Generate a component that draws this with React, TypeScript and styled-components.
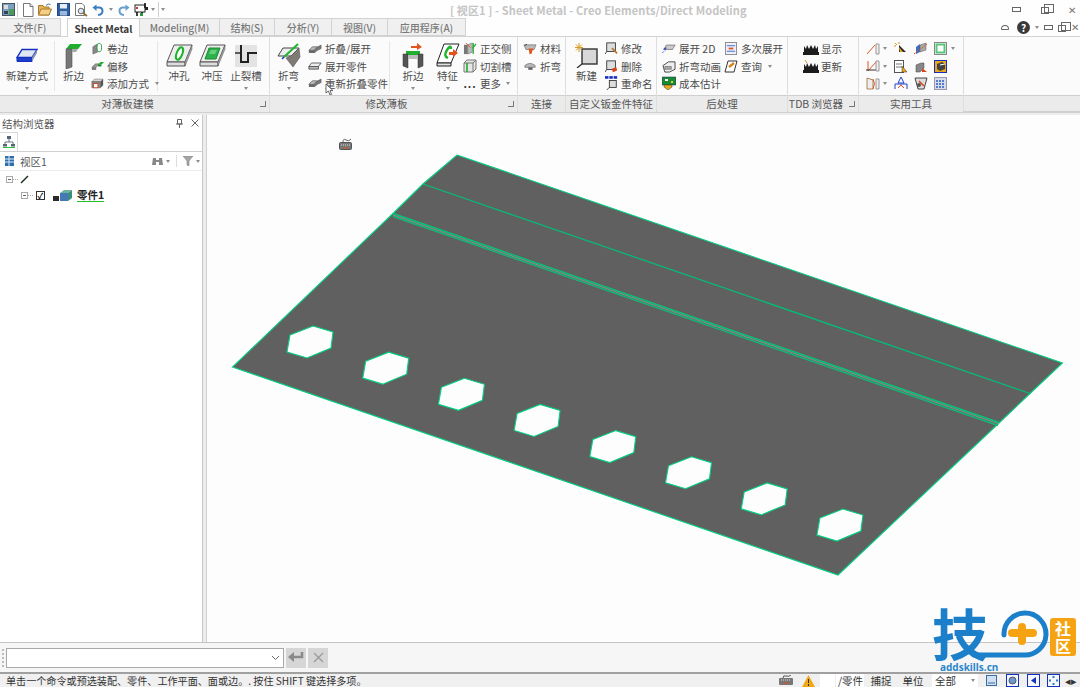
import React from "react";
import styled, { createGlobalStyle } from "styled-components";

const GlobalStyle = createGlobalStyle`
  html, body {
    margin: 0;
    padding: 0;
    background: #fdfdfd;
  }
  * {
    box-sizing: border-box;
  }
`;

const holes = [0, 1, 2, 3, 4, 5, 6, 7].map((i) => {
  const cx = 310 + i * 75.7;
  const cy = 342 + i * 26.15;
  const pts = [
    [-20, -7],
    [3, -16],
    [23, -10],
    [21, 6],
    [-3, 16],
    [-23, 10],
  ];
  return "M" + pts.map((p) => `${cx + p[0]} ${cy + p[1]}`).join("L") + "Z";
});

const outline =
  "M457 155L1062.5 363L1030 393.5L999 423L838 575L232.5 367L393 213.5L423 184Z";

/* quick access icons */
const AppIcon = () => (
  <svg width="13" height="15" viewBox="0 0 13 15">
    <rect x="0.5" y="1.5" width="12" height="12" fill="#7d9fc0" stroke="#456" />
    <rect x="2" y="3" width="4" height="4" fill="#ddd" />
    <rect x="7" y="7" width="5" height="6" fill="#4a9a58" />
    <rect x="2" y="9" width="4" height="3" fill="#345" />
  </svg>
);
const NewDocIcon = () => (
  <svg width="12" height="14" viewBox="0 0 12 14">
    <path d="M1.5 .5H8L11 3.5V13.5H1.5Z" fill="#fff" stroke="#777" />
    <path d="M8 .5V3.5H11" fill="#ddd" stroke="#777" />
  </svg>
);
const OpenIcon = () => (
  <svg width="14" height="13" viewBox="0 0 14 13">
    <path d="M.5 2.5H5L6 4H11V12H.5Z" fill="#e6b45e" stroke="#a67a2c" />
    <path d="M3 6H13.5L11 12H.5Z" fill="#f4cf85" stroke="#a67a2c" />
    <path d="M8 2.5Q10 0 12.5 1.5" fill="none" stroke="#579" />
  </svg>
);
const SaveIcon = () => (
  <svg width="13" height="13" viewBox="0 0 13 13">
    <rect x=".5" y=".5" width="12" height="12" fill="#2f5f9f" stroke="#234a80" />
    <rect x="3" y="1" width="7" height="4.5" fill="#e6eef8" />
    <rect x="3" y="8" width="7" height="4.5" fill="#9db8d8" />
  </svg>
);
const PreviewIcon = () => (
  <svg width="14" height="14" viewBox="0 0 14 14">
    <path d="M1.5 .5H8L10.5 3V12.5H1.5Z" fill="#fff" stroke="#777" />
    <circle cx="7" cy="8" r="2.8" fill="#dbe8f4" stroke="#666" />
    <path d="M9 10L13 13" stroke="#8a6a30" strokeWidth="1.6" />
  </svg>
);
const UndoIcon = () => (
  <svg width="12" height="12" viewBox="0 0 12 12">
    <path d="M3 3.5H7Q10.5 3.5 10.5 7T6 11" fill="none" stroke="#3b7fc0" strokeWidth="2" />
    <path d="M4.5 .5V7L.5 3.5Z" fill="#3b7fc0" />
  </svg>
);
const RedoIcon = () => (
  <svg width="12" height="12" viewBox="0 0 12 12">
    <path d="M9 3.5H5Q1.5 3.5 1.5 7T6 11" fill="none" stroke="#6ba0cc" strokeWidth="2" />
    <path d="M7.5 .5V7L11.5 3.5Z" fill="#6ba0cc" />
  </svg>
);
const MacroIcon = () => (
  <svg width="15" height="15" viewBox="0 0 15 15">
    <rect x="1" y="3" width="10" height="7" fill="#fff" stroke="#222" />
    <path d="M3 10V14M8 10V14M11 1V6" stroke="#111" strokeWidth="1.6" />
    <rect x="6" y="11" width="3" height="3" fill="#2a9a3a" />
    <rect x="11" y="5" width="3" height="3" fill="#222" />
    <rect x="2" y="5" width="2" height="2" fill="#d33" />
  </svg>
);

/* ribbon large icons */
const NewSlabIcon = () => (
  <svg width="22" height="16" viewBox="0 0 22 16">
    <path d="M6 1.5H21L16 9.5H1Z" fill="#dfe6f4" stroke="#1530c0" strokeWidth="1.4" />
    <path d="M1 9.5H16V13.5H1Z" fill="#1e3ec8" stroke="#1530c0" />
    <path d="M16 9.5L21 1.5V5L16 13.5Z" fill="#8a96b8" />
  </svg>
);
const FlangeIcon = () => (
  <svg width="18" height="26" viewBox="0 0 18 26">
    <path d="M1 6L5 1H17L13 6Z" fill="#1fae2e" />
    <path d="M1 6H7V24L1 26Z" fill="#777" stroke="#555" strokeWidth=".6" />
    <path d="M7 6H13L11 9H7Z" fill="#a9a9a9" />
  </svg>
);
const PunchIcon = () => (
  <svg width="27" height="24" viewBox="0 0 27 24">
    <path d="M8 1H26L19 18H1Z" fill="#eee" stroke="#555" />
    <path d="M1 18H19V22H1Z" fill="#ddd" stroke="#555" />
    <path d="M19 18L26 1V5L19 22Z" fill="#aaa" stroke="#555" strokeWidth=".5" />
    <ellipse cx="13.5" cy="9.5" rx="2.8" ry="6.5" transform="rotate(22 13.5 9.5)" fill="#fff" stroke="#1cb52c" strokeWidth="2" />
  </svg>
);
const StampIcon = () => (
  <svg width="27" height="24" viewBox="0 0 27 24">
    <path d="M8 1H26L19 18H1Z" fill="#eee" stroke="#555" />
    <path d="M1 18H19V22H1Z" fill="#ddd" stroke="#555" />
    <path d="M19 18L26 1V5L19 22Z" fill="#aaa" stroke="#555" strokeWidth=".5" />
    <path d="M10 4H21L17 15H6Z" fill="#2cb24a" stroke="#1b8a33" />
    <path d="M12 6H18L16 10H10Z" fill="#67d07e" />
  </svg>
);
const ReliefIcon = () => (
  <svg width="22" height="22" viewBox="0 0 22 22">
    <rect x="0" y="0" width="22" height="22" fill="#e3e3e3" />
    <path d="M6 0V17H13V8H22" fill="none" stroke="#222" strokeWidth="2" />
    <path d="M0 8H6" stroke="#222" strokeWidth="1.4" />
  </svg>
);
const BendIcon = () => (
  <svg width="24" height="25" viewBox="0 0 24 25">
    <path d="M6 5H22L14 13H1Z" fill="#eee" stroke="#444" />
    <path d="M14 13L22 5L23 14L16 24L9 15Z" fill="#7f7a74" stroke="#555" strokeWidth=".6" />
    <path d="M7 14L21 1" stroke="#1fb52e" strokeWidth="2" />
    <path d="M5 16L7 14" stroke="#1530c0" strokeWidth="1.4" />
  </svg>
);
const FlangeEditIcon = () => (
  <svg width="22" height="26" viewBox="0 0 22 26">
    <path d="M9 3H15V0L20 4L15 7V5H9Z" fill="#e2531e" />
    <path d="M4 8H18V12H4Z" fill="#1fae2e" />
    <path d="M1 11H6V25L1 23Z" fill="#555" stroke="#333" strokeWidth=".5" />
    <path d="M16 11H21V23L16 25Z" fill="#555" stroke="#333" strokeWidth=".5" />
    <path d="M6 12H16V16H6Z" fill="#bbb" />
  </svg>
);
const FeatureIcon = () => (
  <svg width="24" height="25" viewBox="0 0 24 25">
    <path d="M8 1H23L15 20H1Z" fill="#fff" stroke="#222" />
    <path d="M1 20H15V23H1Z" fill="#e0e0e0" stroke="#222" />
    <path d="M12 15Q7 13 11 7T15 6" fill="none" stroke="#1cb52c" strokeWidth="2.4" />
    <path d="M13 9H17V6L22 10L17 14V12H13Z" fill="#e2531e" />
  </svg>
);
const NewCustomIcon = () => (
  <svg width="24" height="25" viewBox="0 0 24 25">
    <rect x="7" y="6" width="15" height="15" fill="#d8d8d8" stroke="#333" strokeWidth="1.4" />
    <path d="M7 21L2 25" stroke="#333" strokeWidth="1.4" />
    <path d="M4 0V9M0 4.5H8M1 1.5L7 7.5M7 1.5L1 7.5" stroke="#d99a20" />
  </svg>
);

/* ribbon small icons */
const CurlIcon = () => (
  <svg width="12" height="13" viewBox="0 0 13 14">
    <path d="M2 5L7 2V11L2 13Z" fill="#888" stroke="#555" strokeWidth=".5" />
    <ellipse cx="9" cy="6" rx="2.5" ry="4.5" fill="#fff" stroke="#1b9a33" />
  </svg>
);
const OffsetIcon = () => (
  <svg width="13" height="10" viewBox="0 0 15 11">
    <path d="M1 7L5 3H10L6 7Z" fill="#999" stroke="#555" strokeWidth=".5" />
    <path d="M1 7H6V10H1Z" fill="#777" />
    <path d="M8 4L11 1H15L12 4Z" fill="#1fae2e" />
    <path d="M8 4H12V6H8Z" fill="#178a25" />
  </svg>
);
const AddModeIcon = () => (
  <svg width="13" height="12" viewBox="0 0 15 13">
    <path d="M1 5L4 2H14L11 5Z" fill="#d8d8d8" stroke="#555" strokeWidth=".5" />
    <path d="M1 5H11V12H1Z" fill="#888" stroke="#444" strokeWidth=".5" />
    <rect x="3" y="7" width="5" height="5" fill="#fff" stroke="#d0421b" />
    <path d="M11 5L14 2V9L11 12Z" fill="#555" />
  </svg>
);
const FoldPairIcon = () => (
  <svg width="14" height="12" viewBox="0 0 16 13">
    <path d="M1 8L5 4H11L7 8Z" fill="#bbb" stroke="#444" strokeWidth=".7" />
    <path d="M1 8H7V11H1Z" fill="#666" />
    <path d="M7 8L11 4L15 2V6L11 8L7 11Z" fill="#777" stroke="#444" strokeWidth=".5" />
  </svg>
);
const FlatIcon = () => (
  <svg width="14" height="9" viewBox="0 0 16 10">
    <path d="M4 1H15L12 5H1Z" fill="#eee" stroke="#555" />
    <path d="M1 5H12V8H1Z" fill="#bbb" stroke="#555" />
  </svg>
);
const OrthoIcon = () => (
  <svg width="14" height="13" viewBox="0 0 15 14">
    <path d="M1 3H5V13H1Z" fill="#777" />
    <path d="M5 3L10 1V11L5 13Z" fill="#bbb" stroke="#555" strokeWidth=".5" />
    <path d="M11 1V13M14 2L10 7" stroke="#1fae2e" strokeWidth="1.3" />
    <path d="M3 1L8 6" stroke="#e2531e" />
  </svg>
);
const SlotIcon = () => (
  <svg width="14" height="14" viewBox="0 0 14 14">
    <path d="M1 4L4 1H13V10L10 13H1Z" fill="#e6e6e6" stroke="#777" />
    <path d="M1 4H10V13M10 4L13 1" fill="none" stroke="#777" />
    <path d="M4 4V13" stroke="#1fae2e" strokeWidth="1.6" />
  </svg>
);
const MaterialIcon = () => (
  <svg width="14" height="12" viewBox="0 0 15 13">
    <path d="M1 2H14L12 7H3Z" fill="#bbb" stroke="#555" strokeWidth=".6" />
    <path d="M6 6H11L9 12H7Z" fill="#e2531e" />
    <path d="M4 1L2 3" stroke="#222" />
  </svg>
);
const BendSmallIcon = () => (
  <svg width="12" height="10" viewBox="0 0 14 11">
    <path d="M1 5Q7 0 13 5V7H1Z" fill="#bbb" stroke="#555" strokeWidth=".7" />
    <path d="M5 7H10V10H5Z" fill="#666" />
  </svg>
);
const EditBoxIcon = () => (
  <svg width="13" height="13" viewBox="0 0 15 15">
    <rect x="2" y="1" width="10" height="10" fill="#ddd" stroke="#333" />
    <path d="M2 11L0 14" stroke="#333" />
    <path d="M8 7L14 13" stroke="#b07a30" strokeWidth="2" />
  </svg>
);
const DeleteBoxIcon = () => (
  <svg width="13" height="13" viewBox="0 0 15 15">
    <rect x="2" y="1" width="10" height="10" fill="#ddd" stroke="#333" />
    <path d="M2 11L0 14" stroke="#333" />
    <path d="M8 10L13 8L14 12L9 14Z" fill="#d9421b" />
  </svg>
);
const RenameIcon = () => (
  <svg width="13" height="15" viewBox="0 0 15 17">
    <rect x="0" y="0" width="4" height="3" fill="#1530c0" />
    <rect x="5" y="0" width="4" height="3" fill="#1530c0" />
    <rect x="10" y="0" width="4" height="3" fill="#1530c0" />
    <rect x="5" y="5" width="8" height="8" fill="#ddd" stroke="#333" />
    <path d="M5 13L2 16" stroke="#333" />
  </svg>
);
const Flat2dIcon = () => (
  <svg width="14" height="10" viewBox="0 0 16 11">
    <path d="M5 1H15L12 6H2Z" fill="#ccc" stroke="#555" strokeWidth=".7" />
    <path d="M2 6L5 4" stroke="#1e3ec8" strokeWidth="1.4" />
    <path d="M0 10L4 7" stroke="#1e3ec8" strokeDasharray="1 1" />
  </svg>
);
const AnimateIcon = () => (
  <svg width="14" height="13" viewBox="0 0 15 14">
    <path d="M1 6L7 2H14V10L8 13H3Z" fill="#eee" stroke="#444" />
    <path d="M3 7H10V10H3Z" fill="#aaa" stroke="#444" strokeWidth=".5" />
  </svg>
);
const CostIcon = () => (
  <svg width="14" height="14" viewBox="0 0 14 14">
    <rect x="0" y="1" width="14" height="8" fill="#1b8a33" stroke="#135" strokeWidth=".5" />
    <path d="M2 9H10V11L6 14L2 11Z" fill="#e8a818" stroke="#333" strokeWidth=".5" />
    <rect x="3" y="3" width="3" height="2" fill="#fff" />
    <rect x="9" y="5" width="2" height="2" fill="#dc3" />
  </svg>
);
const MultiFlatIcon = () => (
  <svg width="12" height="13" viewBox="0 0 13 14">
    <rect x=".5" y=".5" width="12" height="13" fill="#eef" stroke="#888" />
    <path d="M2 4H11M2 10H11" stroke="#3b6fc0" />
    <path d="M4 7H9" stroke="#e2531e" strokeWidth="2" />
  </svg>
);
const QueryIcon = () => (
  <svg width="14" height="13" viewBox="0 0 14 13">
    <path d="M4 1H13L10 12H1Z" fill="#fff" stroke="#333" />
    <path d="M5 7L10 3" stroke="#d9821b" strokeWidth="2.4" />
  </svg>
);
const TdbIcon = ({ spark }: { spark?: boolean }) => (
  <svg width="16" height="13" viewBox="0 0 16 13">
    {spark && <path d="M2 0L4 3" stroke="#d99a20" />}
    <path d="M0 13V10H1V4L3 7L4 3L6 7L8 3L10 7L12 3L13 7L15 4V10H16V13Z" fill="#1c1c1c" />
  </svg>
);

/* utility grid icons */
const UtilA = () => (
  <svg width="14" height="12" viewBox="0 0 14 12">
    <path d="M1 11L9 2" stroke="#e2531e" />
    <path d="M10 1H13V11H10Z" fill="#eee" stroke="#999" />
  </svg>
);
const UtilB = () => (
  <svg width="14" height="13" viewBox="0 0 14 13">
    <path d="M2 1V11L10 2" fill="none" stroke="#e2531e" />
    <path d="M0 10H10" stroke="#333" />
    <path d="M10 1H13V11H10Z" fill="#eee" stroke="#999" />
  </svg>
);
const UtilC = () => (
  <svg width="14" height="13" viewBox="0 0 14 13">
    <path d="M1 1L7 3V12H1Z" fill="#eee" stroke="#a85" />
    <path d="M7 2Q10 6 7 12" fill="none" stroke="#e2531e" />
    <path d="M10 2H13V12H10Z" fill="#eee" stroke="#999" />
  </svg>
);
const UtilD = () => (
  <svg width="13" height="13" viewBox="0 0 13 13">
    <path d="M5 3L12 10H5Z" fill="#2a2a2a" />
    <path d="M5 5L9 10H6Z" fill="#e8a818" />
    <path d="M1 1L3 3M5 0V2M0 4H2" stroke="#d99a20" />
  </svg>
);
const UtilE = () => (
  <svg width="14" height="13" viewBox="0 0 14 13">
    <rect x=".5" y=".5" width="9" height="12" fill="#fff" stroke="#555" />
    <path d="M2 4H8M2 7H8" stroke="#777" />
    <path d="M8 6L13 12H8Z" fill="#e8a818" stroke="#333" strokeWidth=".5" />
  </svg>
);
const UtilF = () => (
  <svg width="14" height="13" viewBox="0 0 14 13">
    <path d="M2 5L6 2V10L2 12Z" fill="#3b6fc0" />
    <path d="M6 3L12 1V8L6 10Z" fill="#aaa" stroke="#555" strokeWidth=".5" />
    <path d="M0 12L13 2" stroke="#e2531e" strokeDasharray="2 1" />
  </svg>
);
const UtilG = () => (
  <svg width="13" height="13" viewBox="0 0 13 13">
    <rect x=".5" y=".5" width="12" height="12" fill="#fff" stroke="#888" />
    <rect x="2.5" y="2.5" width="8" height="8" fill="#fff" stroke="#57c87a" strokeWidth="2" />
  </svg>
);
const UtilH = () => (
  <svg width="14" height="13" viewBox="0 0 14 13">
    <path d="M2 12V5L7 3H10V8L6 12Z" fill="#888" stroke="#444" strokeWidth=".5" />
    <path d="M8 8L13 12H8Z" fill="#d9421b" />
  </svg>
);
const UtilI = () => (
  <svg width="13" height="13" viewBox="0 0 13 13">
    <rect x=".5" y=".5" width="12" height="12" fill="#e8a818" stroke="#1530c0" />
    <path d="M3 4L8 2L11 4V9L6 11L3 9Z" fill="#444" />
    <path d="M6 5L11 4" stroke="#fff" />
  </svg>
);
const UtilJ = () => (
  <svg width="14" height="14" viewBox="0 0 14 14">
    <path d="M7 1L10 7H4Z" fill="#fff" stroke="#1e3ec8" />
    <path d="M1 13V8H13V13" fill="none" stroke="#1e3ec8" />
    <path d="M4 12L7 9L10 12" fill="none" stroke="#e2531e" />
  </svg>
);
const UtilK = () => (
  <svg width="14" height="13" viewBox="0 0 14 13">
    <path d="M1 1H13L10 12H4Z" fill="#ddd" stroke="#444" />
    <path d="M5 4L10 9" stroke="#d9421b" strokeWidth="1.5" />
    <circle cx="5" cy="8" r="2" fill="#555" />
  </svg>
);
const UtilL = () => (
  <svg width="13" height="13" viewBox="0 0 13 13">
    <rect x=".5" y=".5" width="12" height="12" fill="#d6dcec" stroke="#99a" />
    <path d="M2 4H11M2 7H11M2 10H11" stroke="#2f5fc0" strokeWidth="1.4" strokeDasharray="2 1" />
  </svg>
);

/* status bar and browser icons */
const TreeTabIcon = () => (
  <svg width="12" height="12" viewBox="0 0 12 12">
    <rect x="4" y="0" width="4" height="3" fill="#567" />
    <path d="M6 3V6M2 6H10M2 6V8M10 6V8" stroke="#678" />
    <rect x="0" y="8" width="4" height="2.5" fill="#567" />
    <rect x="8" y="8" width="4" height="2.5" fill="#567" />
    <path d="M0 11.5H12" stroke="#2cc23c" />
  </svg>
);
const ViewIcon = () => (
  <svg width="9" height="10" viewBox="0 0 9 10">
    <rect x="0" y="0" width="9" height="10" fill="#2f6fb0" />
    <path d="M4 0V10M0 3H9M0 6H9" stroke="#dfeaf5" />
  </svg>
);
const BinocularIcon = () => (
  <svg width="11" height="9" viewBox="0 0 11 9">
    <path d="M1 1H4V3H7V1H10L11 8H7V5H4V8H0Z" fill="#888" />
  </svg>
);
const FunnelIcon = () => (
  <svg width="10" height="10" viewBox="0 0 10 10">
    <path d="M0 0H10L6 5V10L4 9V5Z" fill="#a6a6a6" stroke="#777" strokeWidth=".5" />
  </svg>
);
const PartIcon = () => (
  <svg width="19" height="11" viewBox="0 0 19 11">
    <rect x="0" y="6" width="6" height="5" fill="#2a2a2a" />
    <path d="M7 3H15V11H7Z" fill="#4479b5" />
    <path d="M7 3L11 0H19L15 3Z" fill="#6bb39a" />
    <path d="M15 3L19 0V8L15 11Z" fill="#3b8d7c" />
  </svg>
);
const PencilIcon = () => (
  <svg width="9" height="9" viewBox="0 0 9 9">
    <path d="M1 8L8 1" stroke="#1c2c1c" strokeWidth="1.4" />
  </svg>
);
const PinIcon = () => (
  <svg width="7" height="9" viewBox="0 0 7 9">
    <path d="M1.5 .5H5.5V5H1.5ZM0 5H7M3.5 5V9" fill="none" stroke="#666" />
  </svg>
);
const PanelCloseIcon = () => (
  <svg width="8" height="8" viewBox="0 0 8 8">
    <path d="M.5 .5L7.5 7.5M7.5 .5L.5 7.5" stroke="#666" />
  </svg>
);
const EnterIcon = () => (
  <svg width="18" height="13" viewBox="0 0 18 13">
    <path d="M15 1V6H6" fill="none" stroke="#8a8a8a" strokeWidth="2.6" />
    <path d="M7 1V11L1 6Z" fill="#8a8a8a" />
  </svg>
);
const CancelIcon = () => (
  <svg width="11" height="11" viewBox="0 0 11 11">
    <path d="M1 1L10 10M10 1L1 10" stroke="#9a9a9a" strokeWidth="1.3" />
  </svg>
);
const KeyboardIcon = () => (
  <svg width="14" height="11" viewBox="0 0 14 11">
    <path d="M4 3Q4 0 7 1T12 0" fill="none" stroke="#555" />
    <rect x="0" y="3" width="14" height="7" rx="1" fill="#777" />
    <path d="M2 5H12" stroke="#ddd" strokeDasharray="1 1" />
    <path d="M4 8H10" stroke="#e2531e" />
  </svg>
);
const WarnIcon = () => (
  <svg width="13" height="12" viewBox="0 0 13 12">
    <path d="M6.5 0L13 12H0Z" fill="#f0a818" />
    <path d="M6.5 4V8M6.5 9V11" stroke="#333" />
  </svg>
);
const WinViewIcon = () => (
  <svg width="11" height="11" viewBox="0 0 11 11">
    <rect x=".5" y=".5" width="10" height="10" fill="#cfe0f2" stroke="#3b6fa0" />
    <path d="M2 8H9" stroke="#3b6fa0" />
  </svg>
);
const OutlineBox = ({ children }: { children: React.ReactNode }) => (
  <svg width="13" height="13" viewBox="0 0 13 13">
    <rect x=".5" y=".5" width="12" height="12" fill="#f4f7fb" stroke="#1530c0" />
    {children}
  </svg>
);

const Sheet = () => (
  <ModelSvg viewBox="207 115 873 527">
    <path d={outline + holes.join("")} fill="#606060" fillRule="evenodd" stroke="#00d080" strokeWidth="1.1" />
    <path d="M423 184L1030 393.5" stroke="#00c078" strokeWidth="1.2" />
    <path d="M393 213.5L999 422.5" stroke="#00c878" strokeWidth="1.4" />
    <path d="M393 216.5L998 425.5" stroke="#10b878" strokeWidth="1.4" />
    <path d="M393 215L999 424" stroke="#7a9a8c" strokeWidth="1" />
    <g transform="translate(339 138)">
      <path d="M4 4Q4 0 7 2T12 1" fill="none" stroke="#666" />
      <rect x="0.5" y="4.5" width="12" height="7" rx="1" fill="#777" stroke="#555" />
      <path d="M2 7H11" stroke="#ddd" strokeDasharray="1 1" />
      <path d="M4 10H9" stroke="#e2531e" />
    </g>
  </ModelSvg>
);

export default function App() {
  return (
    <Page>
      <GlobalStyle />
      <TitleBar>
        <Qat>
          <QatSlot $w={14}><AppIcon /></QatSlot>
          <QatSep />
          <QatSlot $w={16}><NewDocIcon /></QatSlot>
          <QatSlot $w={18}><OpenIcon /></QatSlot>
          <QatSlot $w={18}><SaveIcon /></QatSlot>
          <QatSlot $w={17}><PreviewIcon /></QatSlot>
          <QatSlot $w={18}><UndoIcon /></QatSlot>
          <QatSlot $w={8}><Caret /></QatSlot>
          <QatSlot $w={18}><RedoIcon /></QatSlot>
          <QatSlot $w={17}><MacroIcon /></QatSlot>
          <QatSlot $w={6}><Caret /></QatSlot>
          <QatSep />
          <QatSlot $w={4}><Caret /></QatSlot>
        </Qat>
        <WindowTitle>[ 视区1 ] - Sheet Metal - Creo Elements/Direct Modeling</WindowTitle>
        <WinButtons>
          <MinGlyph />
          <RestoreGlyph />
          <CloseGlyph>✕</CloseGlyph>
        </WinButtons>
      </TitleBar>

      <TabRow>
        <Tab $w={61}>文件(F)</Tab>
        <TabGap />
        <Tab $w={73} $active>Sheet Metal</Tab>
        <Tab $w={80}>Modeling(M)</Tab>
        <Tab $w={55}>结构(S)</Tab>
        <Tab $w={57}>分析(Y)</Tab>
        <Tab $w={56}>视图(V)</Tab>
        <Tab $w={78}>应用程序(A)</Tab>
        <TabTools>
          <CollapseGlyph />
          <HelpGlyph>?</HelpGlyph>
          <Caret />
          <MinGlyph />
          <RestoreGlyph />
          <CloseGlyph>✕</CloseGlyph>
        </TabTools>
      </TabRow>

      <Ribbon>
        <Group $w={270}>
          <GroupBody>
            <LargeBtn $w={54}>
              <LargeIcon><NewSlabIcon /></LargeIcon>
              <LargeLabel>新建方式</LargeLabel>
              <Caret />
            </LargeBtn>
            <Sep />
            <LargeBtn $w={31}>
              <LargeIcon><FlangeIcon /></LargeIcon>
              <LargeLabel>折边</LargeLabel>
            </LargeBtn>
            <SmallCol $w={68}>
              <SmallRow><SmallIcon><CurlIcon /></SmallIcon>卷边</SmallRow>
              <SmallRow><SmallIcon><OffsetIcon /></SmallIcon>偏移</SmallRow>
              <SmallRow><SmallIcon><AddModeIcon /></SmallIcon>添加方式<Caret $ml={4} /></SmallRow>
            </SmallCol>
            <Sep />
            <LargeBtn $w={36}>
              <LargeIcon><PunchIcon /></LargeIcon>
              <LargeLabel>冲孔</LargeLabel>
            </LargeBtn>
            <LargeBtn $w={30}>
              <LargeIcon><StampIcon /></LargeIcon>
              <LargeLabel>冲压</LargeLabel>
            </LargeBtn>
            <LargeBtn $w={38}>
              <LargeIcon><ReliefIcon /></LargeIcon>
              <LargeLabel>止裂槽</LargeLabel>
              <Caret />
            </LargeBtn>
          </GroupBody>
          <GroupLabel $launcher>对薄板建模<Launcher /></GroupLabel>
        </Group>

        <Group $w={248}>
          <GroupBody>
            <LargeBtn $w={37}>
              <LargeIcon><BendIcon /></LargeIcon>
              <LargeLabel>折弯</LargeLabel>
              <Caret />
            </LargeBtn>
            <SmallCol $w={82}>
              <SmallRow><SmallIcon><FoldPairIcon /></SmallIcon>折叠/展开</SmallRow>
              <SmallRow><SmallIcon><FlatIcon /></SmallIcon>展开零件</SmallRow>
              <SmallRow>
                <SmallIcon><FoldPairIcon /></SmallIcon>重新折叠零件
                <Cursor viewBox="0 0 9 13" width="9" height="13">
                  <path d="M1 1V10L3.4 8L5 12L6.5 11.4L5 7.6H8Z" fill="#fff" stroke="#444" strokeWidth=".8" />
                </Cursor>
              </SmallRow>
            </SmallCol>
            <Sep />
            <LargeBtn $w={40}>
              <LargeIcon><FlangeEditIcon /></LargeIcon>
              <LargeLabel>折边</LargeLabel>
              <Caret />
            </LargeBtn>
            <LargeBtn $w={29}>
              <LargeIcon><FeatureIcon /></LargeIcon>
              <LargeLabel>特征</LargeLabel>
              <Caret />
            </LargeBtn>
            <SmallCol $w={55}>
              <SmallRow><SmallIcon><OrthoIcon /></SmallIcon>正交侧</SmallRow>
              <SmallRow><SmallIcon><SlotIcon /></SmallIcon>切割槽</SmallRow>
              <SmallRow><SmallIcon>...</SmallIcon>更多<Caret $ml={3} /></SmallRow>
            </SmallCol>
          </GroupBody>
          <GroupLabel $launcher>修改薄板<Launcher /></GroupLabel>
        </Group>

        <Group $w={48}>
          <GroupBody $pad={4}>
            <SmallCol $w={43}>
              <SmallRow><SmallIcon><MaterialIcon /></SmallIcon>材料</SmallRow>
              <SmallRow><SmallIcon><BendSmallIcon /></SmallIcon>折弯</SmallRow>
            </SmallCol>
          </GroupBody>
          <GroupLabel>连接</GroupLabel>
        </Group>

        <Group $w={91}>
          <GroupBody $pad={4}>
            <LargeBtn $w={33}>
              <LargeIcon><NewCustomIcon /></LargeIcon>
              <LargeLabel>新建</LargeLabel>
            </LargeBtn>
            <SmallCol $w={54}>
              <SmallRow><SmallIcon><EditBoxIcon /></SmallIcon>修改</SmallRow>
              <SmallRow><SmallIcon><DeleteBoxIcon /></SmallIcon>删除</SmallRow>
              <SmallRow><SmallIcon><RenameIcon /></SmallIcon>重命名</SmallRow>
            </SmallCol>
          </GroupBody>
          <GroupLabel>自定义钣金件特征</GroupLabel>
        </Group>

        <Group $w={131}>
          <GroupBody $pad={4}>
            <SmallCol $w={62}>
              <SmallRow><SmallIcon><Flat2dIcon /></SmallIcon>展开 2D</SmallRow>
              <SmallRow><SmallIcon><AnimateIcon /></SmallIcon>折弯动画</SmallRow>
              <SmallRow><SmallIcon><CostIcon /></SmallIcon>成本估计</SmallRow>
            </SmallCol>
            <SmallCol $w={60}>
              <SmallRow><SmallIcon><MultiFlatIcon /></SmallIcon>多次展开</SmallRow>
              <SmallRow><SmallIcon><QueryIcon /></SmallIcon>查询<Caret $ml={4} /></SmallRow>
            </SmallCol>
          </GroupBody>
          <GroupLabel>后处理</GroupLabel>
        </Group>

        <Group $w={71}>
          <GroupBody $pad={15}>
            <SmallCol $w={50}>
              <SmallRow><SmallIcon><TdbIcon /></SmallIcon>显示</SmallRow>
              <SmallRow><SmallIcon><TdbIcon spark /></SmallIcon>更新</SmallRow>
            </SmallCol>
          </GroupBody>
          <GroupLabel $launcher>TDB 浏览器<Launcher /></GroupLabel>
        </Group>

        <Group $w={105}>
          <GroupBody $pad={7}>
            <UtilGrid>
              <UtilCell><UtilA /><Caret $ml={3} /></UtilCell>
              <UtilCell><UtilD /></UtilCell>
              <UtilCell><UtilF /></UtilCell>
              <UtilCell><UtilG /><Caret $ml={4} /></UtilCell>
              <UtilCell><UtilB /><Caret $ml={3} /></UtilCell>
              <UtilCell><UtilE /></UtilCell>
              <UtilCell><UtilH /></UtilCell>
              <UtilCell><UtilI /></UtilCell>
              <UtilCell><UtilC /><Caret $ml={3} /></UtilCell>
              <UtilCell><UtilJ /></UtilCell>
              <UtilCell><UtilK /></UtilCell>
              <UtilCell><UtilL /></UtilCell>
            </UtilGrid>
          </GroupBody>
          <GroupLabel>实用工具</GroupLabel>
        </Group>

        <GroupFiller>
          <GroupFillerBody />
          <GroupFillerLabel />
        </GroupFiller>
      </Ribbon>

      <Main>
        <Browser>
          <BrowserHeader>
            <span>结构浏览器</span>
            <BrowserTools>
              <PinIcon />
              <PanelCloseIcon />
            </BrowserTools>
          </BrowserHeader>
          <BrowserTabs>
            <BrowserTab><TreeTabIcon /></BrowserTab>
          </BrowserTabs>
          <ViewRow>
            <ViewIcon />
            <ViewName>视区1</ViewName>
            <ViewTools>
              <BinocularIcon />
              <Caret />
              <ToolDivider />
              <FunnelIcon />
              <Caret />
            </ViewTools>
          </ViewRow>
          <Tree>
            <TreeRow $depth={0}>
              <Expander />
              <TreeDash />
              <PencilIcon />
            </TreeRow>
            <TreeRow $depth={1}>
              <Expander />
              <TreeDash />
              <TreeCheck>✓</TreeCheck>
              <PartIcon />
              <PartName>零件1</PartName>
            </TreeRow>
          </Tree>
        </Browser>
        <Splitter />
        <Viewport>
          <Sheet />
        </Viewport>
      </Main>

      <CommandBar>
        <Grip />
        <CommandBox>
          <CommandChevron viewBox="0 0 9 6" width="9" height="6">
            <path d="M1 1L4.5 4.5L8 1" fill="none" stroke="#666" />
          </CommandChevron>
        </CommandBox>
        <CommandBtn><EnterIcon /></CommandBtn>
        <CommandBtn><CancelIcon /></CommandBtn>
      </CommandBar>

      <StatusBar>
        <StatusText>单击一个命令或预选装配、零件、工作平面、面或边。. 按住 SHIFT 键选择多项。</StatusText>
        <StatusRight>
          <StatusSlot $w={20}><KeyboardIcon /></StatusSlot>
          <StatusSlot $w={24}><WarnIcon /></StatusSlot>
          <StatusField $w={15} />
          <StatusField $w={28}>/零件</StatusField>
          <StatusSlot $w={32}>捕捉</StatusSlot>
          <StatusSlot $w={32}>单位</StatusSlot>
          <StatusCombo>全部<Caret /></StatusCombo>
          <StatusSlot $w={21}><WinViewIcon /></StatusSlot>
          <StatusSlot $w={21}>
            <OutlineBox><circle cx="6.5" cy="6.5" r="3.5" fill="#6a9ac8" stroke="#556" /></OutlineBox>
          </StatusSlot>
          <StatusSlot $w={21}>
            <OutlineBox><path d="M9 3V10L4 6.5Z" fill="#1530c0" /></OutlineBox>
          </StatusSlot>
          <StatusSlot $w={18}>
            <OutlineBox><path d="M6.5 2V4M6.5 9V11M2 6.5H4M9 6.5H11" stroke="#2f7fc0" strokeWidth="2" /></OutlineBox>
          </StatusSlot>
          <StatusSlot $w={18}>◂▸</StatusSlot>
        </StatusRight>
      </StatusBar>

      <Logo>
        <LogoRow>
          <LogoGlyph>技</LogoGlyph>
          <LogoRing viewBox="0 0 60 54" width="60" height="54">
            <path
              d="M-16 50H33A21 21 0 1 0 14 30"
              fill="none"
              stroke="#1c7fc9"
              strokeWidth="5"
              strokeLinecap="round"
            />
            <path d="M22 28H43M32 22V36" stroke="#f5a313" strokeWidth="8" strokeLinecap="round" />
          </LogoRing>
          <LogoBadge>
            <LogoBadgeChar>社</LogoBadgeChar>
            <LogoBadgeChar>区</LogoBadgeChar>
          </LogoBadge>
        </LogoRow>
        <LogoDomain>addskills.cn</LogoDomain>
      </Logo>
    </Page>
  );
}

const cjk = `"Noto Sans CJK SC", "Noto Sans", sans-serif`;

const Page = styled.div`
  position: relative;
  width: 1080px;
  height: 687px;
  overflow: hidden;
  display: flex;
  flex-direction: column;
  background: #fdfdfd;
  font-family: ${cjk};
  font-size: 10.5px;
  color: #4c4c4c;
`;

const TitleBar = styled.div`
  height: 19px;
  flex: none;
  display: flex;
  align-items: center;
  background: #fefefe;
  padding-left: 1px;
`;

const Qat = styled.div`
  width: 166px;
  display: flex;
  align-items: center;
`;

const QatSlot = styled.div<{ $w: number }>`
  width: ${(p) => p.$w}px;
  flex: none;
  display: flex;
  justify-content: center;
  align-items: center;
`;

const QatSep = styled.div`
  width: 1px;
  height: 15px;
  flex: none;
  margin: 0 2px;
  background: #cfcfcf;
`;

const WindowTitle = styled.div`
  margin-left: 283px;
  font-weight: 700;
  font-size: 11px;
  letter-spacing: 0.1px;
  color: #c4c4c4;
  white-space: nowrap;
`;

const WinButtons = styled.div`
  margin-left: auto;
  width: 68px;
  padding-right: 4px;
  display: flex;
  justify-content: space-between;
  align-items: center;
`;

const MinGlyph = styled.div`
  width: 9px;
  height: 5px;
  border: 1px solid #666;
`;

const RestoreGlyph = styled.div`
  position: relative;
  width: 8px;
  height: 7px;
  margin-top: 2px;
  border: 1px solid #666;

  &::after {
    content: "";
    position: absolute;
    left: 2px;
    top: -4px;
    width: 8px;
    height: 7px;
    border: 1px solid #666;
  }
`;

const CloseGlyph = styled.div`
  font-size: 10px;
  line-height: 10px;
  color: #777;
`;

const TabRow = styled.div`
  height: 18px;
  flex: none;
  display: flex;
  align-items: flex-end;
  background: #fefefe;
  border-bottom: 1px solid #d2d2d2;
`;

const Tab = styled.div<{ $w: number; $active?: boolean }>`
  position: relative;
  width: ${(p) => p.$w}px;
  height: ${(p) => (p.$active ? 19 : 18)}px;
  flex: none;
  display: flex;
  align-items: center;
  justify-content: center;
  font-size: 10px;
  white-space: nowrap;
  font-weight: ${(p) => (p.$active ? 700 : 500)};
  color: ${(p) => (p.$active ? "#3a3a3a" : "#7a7a7a")};
  background: ${(p) => (p.$active ? "#fdfdfd" : "#f0f0f0")};
  border: 1px solid #d2d2d2;
  border-left-width: ${(p) => (p.$active ? 1 : 0)}px;
  border-bottom: ${(p) => (p.$active ? "none" : "1px solid #d2d2d2")};
  margin-bottom: ${(p) => (p.$active ? -1 : 0)}px;
  z-index: ${(p) => (p.$active ? 1 : 0)};
`;

const TabGap = styled.div`
  width: 6px;
  flex: none;
`;

const TabTools = styled.div`
  margin-left: auto;
  height: 18px;
  padding-right: 1px;
  display: flex;
  align-items: center;
  gap: 5px;
`;

const CollapseGlyph = styled.div`
  width: 8px;
  height: 5px;
  border: 1px solid #666;
  border-radius: 5px 5px 1px 1px;
  margin-right: 3px;
`;

const HelpGlyph = styled.div`
  width: 13px;
  height: 13px;
  border-radius: 50%;
  background: #3a3a3a;
  color: #fff;
  font-size: 10px;
  font-weight: 700;
  line-height: 13px;
  text-align: center;
`;

const Caret = styled.span<{ $ml?: number }>`
  display: inline-block;
  flex: none;
  width: 0;
  height: 0;
  margin-left: ${(p) => p.$ml ?? 0}px;
  border-left: 2.5px solid transparent;
  border-right: 2.5px solid transparent;
  border-top: 3px solid #8c8c8c;
`;

const Ribbon = styled.div`
  height: 76px;
  flex: none;
  display: flex;
  border-bottom: 2px solid #d0d0d0;
  background: #fbfbfb;
`;

const Group = styled.div<{ $w: number }>`
  width: ${(p) => p.$w}px;
  flex: none;
  display: flex;
  flex-direction: column;
  border-right: 1px solid #dedede;
`;

const GroupBody = styled.div<{ $pad?: number }>`
  height: 58px;
  flex: none;
  display: flex;
  padding-left: ${(p) => p.$pad ?? 0}px;
`;

const GroupLabel = styled.div<{ $launcher?: boolean }>`
  position: relative;
  flex: 1;
  display: flex;
  align-items: center;
  justify-content: center;
  padding-right: ${(p) => (p.$launcher ? 14 : 0)}px;
  padding-bottom: 1px;
  background: #ebebeb;
  border-top: 1px solid #cfcfcf;
  color: #555;
  font-size: 10.5px;
  white-space: nowrap;
`;

const Launcher = styled.span`
  position: absolute;
  right: 3px;
  top: 5px;
  width: 6px;
  height: 6px;
  border-right: 1px solid #777;
  border-bottom: 1px solid #777;
`;

const GroupFiller = styled.div`
  flex: 1;
  display: flex;
  flex-direction: column;
`;

const GroupFillerBody = styled.div`
  height: 58px;
`;

const GroupFillerLabel = styled.div`
  flex: 1;
  background: #ebebeb;
  border-top: 1px solid #cfcfcf;
`;

const LargeBtn = styled.div<{ $w: number }>`
  width: ${(p) => p.$w}px;
  flex: none;
  display: flex;
  flex-direction: column;
  align-items: center;
  padding-top: 6px;
`;

const LargeIcon = styled.div`
  height: 25px;
  display: flex;
  align-items: center;
  justify-content: center;
`;

const LargeLabel = styled.div`
  height: 19px;
  line-height: 16px;
  font-size: 10.5px;
  white-space: nowrap;
`;

const Sep = styled.div`
  width: 1px;
  flex: none;
  margin: 4px 3px 4px 0;
  background: #e6e6e6;
`;

const SmallCol = styled.div<{ $w: number }>`
  width: ${(p) => p.$w}px;
  flex: none;
  display: flex;
  flex-direction: column;
  padding-top: 3px;
`;

const SmallRow = styled.div`
  position: relative;
  height: 17.4px;
  display: flex;
  align-items: center;
  gap: 2px;
  font-size: 10.5px;
  white-space: nowrap;
`;

const SmallIcon = styled.div`
  width: 16px;
  flex: none;
  display: flex;
  align-items: center;
  justify-content: center;
  font-weight: 700;
  color: #333;
  letter-spacing: 1px;
`;

const Cursor = styled.svg`
  position: absolute;
  left: 18px;
  top: 8px;
`;

const UtilGrid = styled.div`
  display: grid;
  grid-template-columns: 28px 20px 20px 24px;
  grid-auto-rows: 17.4px;
  padding-top: 3px;
`;

const UtilCell = styled.div`
  display: flex;
  align-items: center;
`;

const Main = styled.div`
  flex: 1;
  min-height: 0;
  display: flex;
  padding-top: 2px;
  background: #ececec;
  border-bottom: 1px solid #c4c4c4;
`;

const Browser = styled.div`
  width: 203px;
  flex: none;
  display: flex;
  flex-direction: column;
  background: #fff;
  border-right: 1px solid #c8c8c8;
`;

const BrowserHeader = styled.div`
  height: 16px;
  flex: none;
  padding: 0 3px 0 2px;
  display: flex;
  align-items: center;
  justify-content: space-between;
  color: #555;
`;

const BrowserTools = styled.div`
  display: flex;
  align-items: center;
  gap: 8px;
`;

const BrowserTabs = styled.div`
  height: 21px;
  flex: none;
  display: flex;
  align-items: flex-end;
  border-bottom: 1px solid #d0d0d0;
`;

const BrowserTab = styled.div`
  width: 18px;
  height: 19px;
  display: flex;
  align-items: center;
  justify-content: center;
  border: 1px solid #d8d8d8;
  border-bottom: none;
  border-left: none;
  background: #fff;
`;

const ViewRow = styled.div`
  height: 19px;
  flex: none;
  padding: 0 2px 0 5px;
  display: flex;
  align-items: center;
  border-bottom: 1px solid #ececec;
`;

const ViewName = styled.span`
  margin-left: 6px;
  color: #555;
`;

const ViewTools = styled.div`
  margin-left: auto;
  display: flex;
  align-items: center;
  gap: 3px;
`;

const ToolDivider = styled.div`
  width: 1px;
  height: 12px;
  margin: 0 3px;
  background: #ddd;
`;

const Tree = styled.div`
  display: flex;
  flex-direction: column;
`;

const TreeRow = styled.div<{ $depth: number }>`
  height: 16px;
  padding-left: ${(p) => 6 + p.$depth * 15}px;
  display: flex;
  align-items: center;
`;

const Expander = styled.div`
  position: relative;
  width: 7px;
  height: 7px;
  flex: none;
  border: 1px solid #aaa;

  &::after {
    content: "";
    position: absolute;
    left: 1px;
    top: 2px;
    width: 3px;
    height: 1px;
    background: #666;
  }
`;

const TreeDash = styled.div`
  width: 5px;
  height: 0;
  flex: none;
  margin-right: 2px;
  border-top: 1px dotted #aaa;
`;

const TreeCheck = styled.div`
  width: 9px;
  height: 9px;
  flex: none;
  margin: 0 8px 0 1px;
  border: 1px solid #333;
  font-size: 8px;
  font-weight: 700;
  line-height: 8px;
  text-align: center;
  color: #111;
`;

const PartName = styled.span`
  margin-left: 5px;
  font-weight: 700;
  color: #222;
  border-bottom: 1px solid #1fc02c;
  line-height: 12px;
`;

const Splitter = styled.div`
  width: 3px;
  flex: none;
  background: #ededed;
`;

const Viewport = styled.div`
  flex: 1;
  min-width: 0;
  background: #fdfdfd;
  border-left: 1px solid #d0d0d0;
`;

const ModelSvg = styled.svg`
  display: block;
  width: 873px;
  height: 527px;
`;

const CommandBar = styled.div`
  height: 29px;
  flex: none;
  display: flex;
  align-items: center;
  gap: 2px;
  padding-left: 2px;
  background: #f6f6f6;
`;

const Grip = styled.div`
  width: 2px;
  height: 18px;
  border-left: 2px dotted #bbb;
`;

const CommandBox = styled.div`
  width: 278px;
  height: 20px;
  padding-right: 3px;
  display: flex;
  align-items: center;
  justify-content: flex-end;
  background: #fff;
  border: 1px solid #a8a8a8;
`;

const CommandChevron = styled.svg`
  display: block;
`;

const CommandBtn = styled.div`
  width: 20px;
  height: 20px;
  flex: none;
  display: flex;
  align-items: center;
  justify-content: center;
  background: #d6d6d6;
`;

const StatusBar = styled.div`
  height: 15px;
  flex: none;
  display: flex;
  align-items: center;
  padding-left: 6px;
  background: #f0f0f0;
  border-top: 2px solid #a0a0a0;
  white-space: nowrap;
  color: #333;
`;

const StatusText = styled.div`
  font-size: 10.1px;
`;

const StatusRight = styled.div`
  margin-left: auto;
  display: flex;
  align-items: center;
  height: 100%;
`;

const StatusSlot = styled.div<{ $w: number }>`
  width: ${(p) => p.$w}px;
  flex: none;
  display: flex;
  align-items: center;
  justify-content: center;
  font-size: 10.5px;
`;

const StatusField = styled.div<{ $w: number }>`
  width: ${(p) => p.$w}px;
  height: 100%;
  flex: none;
  margin-right: 1px;
  padding-left: 2px;
  background: #fff;
  font-size: 10.5px;
  line-height: 13px;
  text-align: left;
`;

const StatusCombo = styled.div`
  width: 46px;
  flex: none;
  height: 100%;
  margin: 0 3px;
  padding: 0 3px;
  display: flex;
  align-items: center;
  justify-content: space-between;
  background: #fff;
  font-size: 10.5px;
`;

const Logo = styled.div`
  position: absolute;
  left: 932px;
  top: 603px;
  display: flex;
  flex-direction: column;
`;

const LogoRow = styled.div`
  display: flex;
  align-items: center;
  height: 58px;
`;

const LogoGlyph = styled.div`
  width: 58px;
  height: 58px;
  font-family: ${cjk};
  font-size: 56px;
  font-weight: 700;
  line-height: 58px;
  color: #1c7fc9;
`;

const LogoRing = styled.svg`
  display: block;
  flex: none;
  overflow: visible;
`;

const LogoBadge = styled.div`
  width: 26px;
  height: 38px;
  margin-top: 9px;
  display: flex;
  flex-direction: column;
  align-items: center;
  justify-content: center;
  border-radius: 3px;
  background: #f5a313;
  color: #fff;
`;

const LogoBadgeChar = styled.span`
  display: block;
  height: 17px;
  font-size: 16px;
  font-weight: 700;
  line-height: 17px;
`;

const LogoDomain = styled.div`
  height: 10px;
  margin-top: 1px;
  margin-left: 8px;
  font-family: "Noto Sans", sans-serif;
  font-size: 10px;
  font-weight: 700;
  line-height: 10px;
  color: #2a86cc;
`;
